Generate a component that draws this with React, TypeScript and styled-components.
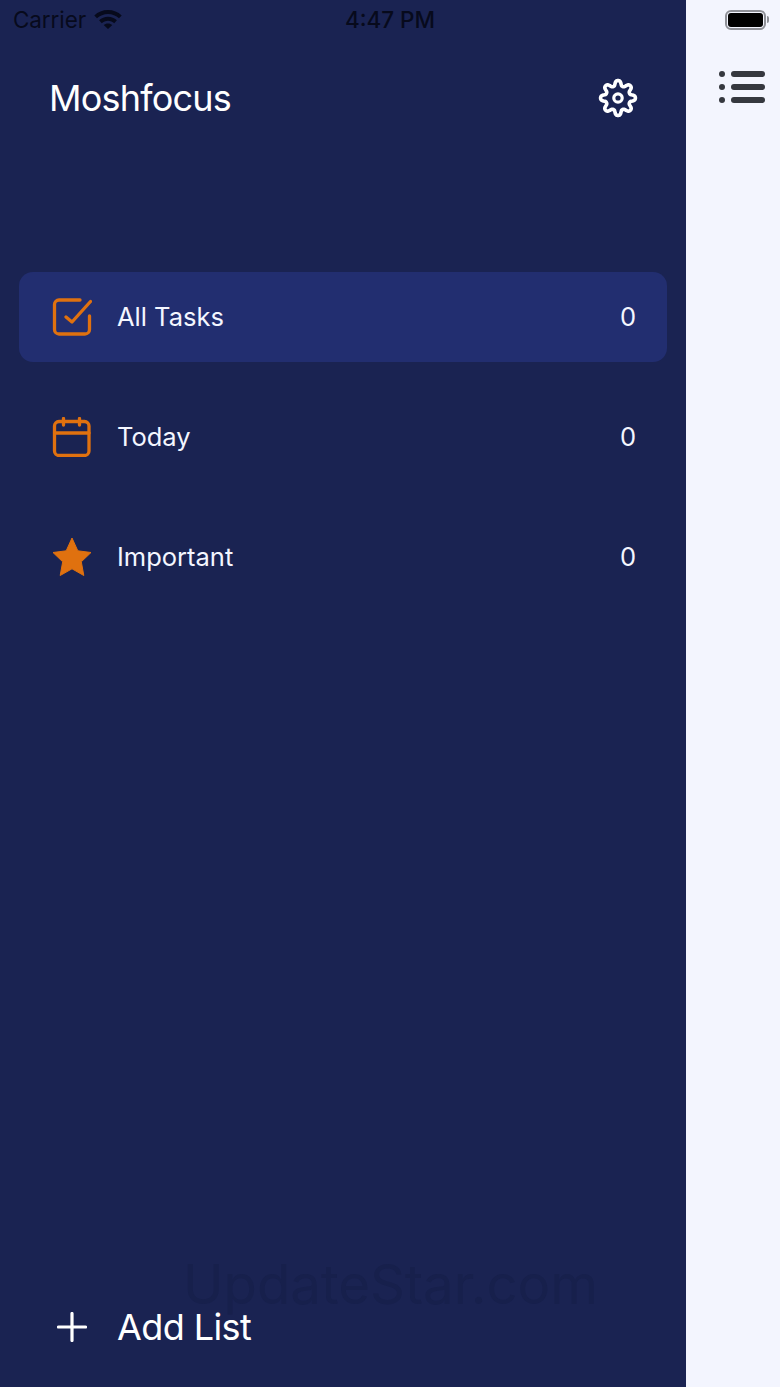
import styled, { createGlobalStyle } from 'styled-components'

const orange = '#e0710f'

const GlobalStyle = createGlobalStyle`
	html, body {
		margin: 0;
		padding: 0;
		background: #f3f5fe;
	}
	* {
		box-sizing: border-box;
	}
`

const lists = [
	{ name: 'All Tasks', count: 0, icon: 'check', active: true },
	{ name: 'Today', count: 0, icon: 'calendar', active: false },
	{ name: 'Important', count: 0, icon: 'star', active: false },
]

// wavy outline with 8 rounded lobes, one pointing straight up
const gearPath = () => {
	const points: string[] = []
	for (let i = 0; i < 160; i++) {
		const angle = (i / 160) * Math.PI * 2
		const wave = Math.tanh(1.5 * Math.cos(8 * angle)) / Math.tanh(1.5)
		const radius = 14.9 + 2.5 * wave
		const x = 22 + radius * Math.sin(angle)
		const y = 22 - radius * Math.cos(angle)
		points.push(`${x.toFixed(2)} ${y.toFixed(2)}`)
	}
	return `M${points.join('L')}Z`
}

const GearIcon = () => (
	<svg width="44" height="44" viewBox="0 0 44 44" fill="none">
		<path d={gearPath()} stroke="#ffffff" strokeWidth="3.600" strokeLinejoin="round" />
		<circle cx="22" cy="22" r="4.200" stroke="#ffffff" strokeWidth="3.200" />
	</svg>
)

const ListIcon = ({ kind }: { kind: string }) => {
	if (kind === 'check') {
		return (
			<IconSvg viewBox="0 0 40 40" fill="none">
				<path
					d="M28 3H7a4.500 4.500 0 0 0-4.500 4.500v25A4.500 4.500 0 0 0 7 37h26a4.500 4.500 0 0 0 4.500-4.500V19"
					stroke={orange}
					strokeWidth="3.300"
					strokeLinecap="round"
				/>
				<path
					d="M14 20l6 5L38.500 4.500"
					stroke={orange}
					strokeWidth="3.300"
					strokeLinecap="round"
					strokeLinejoin="round"
				/>
			</IconSvg>
		)
	}
	if (kind === 'calendar') {
		return (
			<IconSvg viewBox="0 0 40 40" fill="none">
				<rect x="2.500" y="4.500" width="34.500" height="34" rx="4.500" stroke={orange} strokeWidth="3.300" />
				<path
					d="M2.500 16h34.500M11.500 1.500v6.500M27.500 1.500v6.500"
					stroke={orange}
					strokeWidth="3.300"
					strokeLinecap="round"
				/>
			</IconSvg>
		)
	}
	return (
		<IconSvg viewBox="0 0 40 40" fill="none">
			<path
				d="M20 1l5.800 12.800 13.200 1.700-9.700 9.300 2.500 13.700L20 31.800 8.200 38.500l2.500-13.700L1 15.500l13.200-1.700z"
				fill={orange}
				stroke={orange}
				strokeWidth="1"
				strokeLinejoin="round"
			/>
		</IconSvg>
	)
}

export default function App() {
	return (
		<>
			<GlobalStyle />
			<Screen>
				<Drawer>
					<Header>
						<Title>Moshfocus</Title>
						<GearIcon />
					</Header>
					<Lists>
						{lists.map(item => (
							<ListRow key={item.name} $active={item.active}>
								<ListIcon kind={item.icon} />
								<ListName>{item.name}</ListName>
								<ListCount>{item.count}</ListCount>
							</ListRow>
						))}
					</Lists>
					<AddList>
						<svg width="30" height="30" viewBox="0 0 30 30" fill="none">
							<path
								d="M15 1.500v27M1.500 15h27"
								stroke="#ffffff"
								strokeWidth="3.200"
								strokeLinecap="round"
							/>
						</svg>
						<AddLabel>Add List</AddLabel>
					</AddList>
				</Drawer>
				<Peek>
					<svg width="48" height="36" viewBox="0 0 48 36" fill="#35383f">
						<circle cx="4" cy="5" r="3" />
						<circle cx="4" cy="18" r="3" />
						<circle cx="4" cy="31" r="3" />
						<rect x="13" y="2" width="34" height="6" rx="3" />
						<rect x="13" y="15" width="34" height="6" rx="3" />
						<rect x="13" y="28" width="34" height="6" rx="3" />
					</svg>
				</Peek>
				<StatusBar>
					<StatusLeft>
						<span>Carrier</span>
						<svg width="28" height="19" viewBox="0 0 28 19" fill="#070a1c">
							<path d="M14 0c5.300 0 10.100 2 13.700 5.400l-2.700 2.900C22.100 5.600 18.200 4 14 4S5.900 5.600 3 8.300L.3 5.400C3.900 2 8.700 0 14 0z" />
							<path d="M14 6.800c3.400 0 6.500 1.300 8.900 3.500l-2.700 2.900c-1.600-1.500-3.800-2.400-6.200-2.400s-4.600.9-6.200 2.400l-2.700-2.900c2.400-2.200 5.500-3.500 8.900-3.500z" />
							<path d="M14 13.400c1.700 0 3.200.6 4.300 1.700L14 19l-4.300-3.900c1.100-1.100 2.600-1.700 4.300-1.700z" />
						</svg>
					</StatusLeft>
					<Clock>4:47 PM</Clock>
					<Battery>
						<BatteryBody>
							<BatteryFill />
						</BatteryBody>
						<BatteryTip />
					</Battery>
				</StatusBar>
				<Watermark>UpdateStar.com</Watermark>
			</Screen>
		</>
	)
}

const Screen = styled.div`
	position: relative;
	display: flex;
	width: 780px;
	height: 1387px;
	overflow: hidden;
	font-family: Inter, 'Liberation Sans', sans-serif;
`

const Drawer = styled.div`
	display: flex;
	flex-direction: column;
	width: 686px;
	padding: 76px 19px 42px;
	background: #1a2352;
	color: #ffffff;
`

const Header = styled.div`
	display: flex;
	align-items: center;
	justify-content: space-between;
	height: 44px;
	padding: 0 27px 0 30px;
`

const Title = styled.div`
	font-size: 36px;
	font-weight: 400;
	letter-spacing: -0.8px;
`

const Lists = styled.div`
	display: flex;
	flex-direction: column;
	gap: 30px;
	margin-top: 152px;
`

const ListRow = styled.div<{ $active: boolean }>`
	display: flex;
	align-items: center;
	height: 90px;
	padding: 0 31px 0 33px;
	border-radius: 14px;
	background: ${props => (props.$active ? '#222e70' : 'transparent')};
`

const IconSvg = styled.svg`
	flex: none;
	width: 40px;
	height: 40px;
`

const ListName = styled.div`
	flex: 1;
	margin-left: 25px;
	font-size: 25.500px;
	line-height: 30px;
	color: #f4f6ff;
`

const ListCount = styled.div`
	font-size: 25.500px;
	line-height: 30px;
	color: #f4f6ff;
`

const AddList = styled.div`
	display: flex;
	align-items: center;
	gap: 30px;
	margin-top: auto;
	padding-left: 38px;
`

const AddLabel = styled.div`
	font-size: 36px;
	line-height: 36px;
	letter-spacing: -0.6px;
`

const Peek = styled.div`
	flex: 1;
	display: flex;
	justify-content: flex-end;
	padding: 69px 14px 0 0;
	background: #f3f5fe;
`

const StatusBar = styled.div`
	position: absolute;
	top: 0;
	left: 0;
	right: 0;
	display: grid;
	grid-template-columns: 1fr auto 1fr;
	align-items: center;
	height: 39px;
	padding: 0 13px;
	color: #070a1c;
	font-family: Inter, 'Liberation Sans', sans-serif;
	font-size: 22.500px;
`

const StatusLeft = styled.div`
	display: flex;
	align-items: center;
	gap: 8px;
	letter-spacing: -0.1px;
`

const Clock = styled.div`
	font-weight: 500;
`

const Battery = styled.div`
	display: flex;
	align-items: center;
	justify-content: flex-end;
	gap: 1px;
	margin-right: -2px;
`

const BatteryBody = styled.div`
	width: 41px;
	height: 20px;
	padding: 1px;
	border: 2px solid #8e9097;
	border-radius: 6px;
`

const BatteryFill = styled.div`
	width: 100%;
	height: 100%;
	border-radius: 3px;
	background: #000000;
`

const BatteryTip = styled.div`
	width: 2px;
	height: 7px;
	border-radius: 0 2px 2px 0;
	background: #8e9097;
`

const Watermark = styled.div`
	position: absolute;
	top: 1260px;
	left: 183px;
	font-size: 54.500px;
	line-height: 48px;
	color: rgba(10, 15, 40, 0.14);
	white-space: nowrap;
`
